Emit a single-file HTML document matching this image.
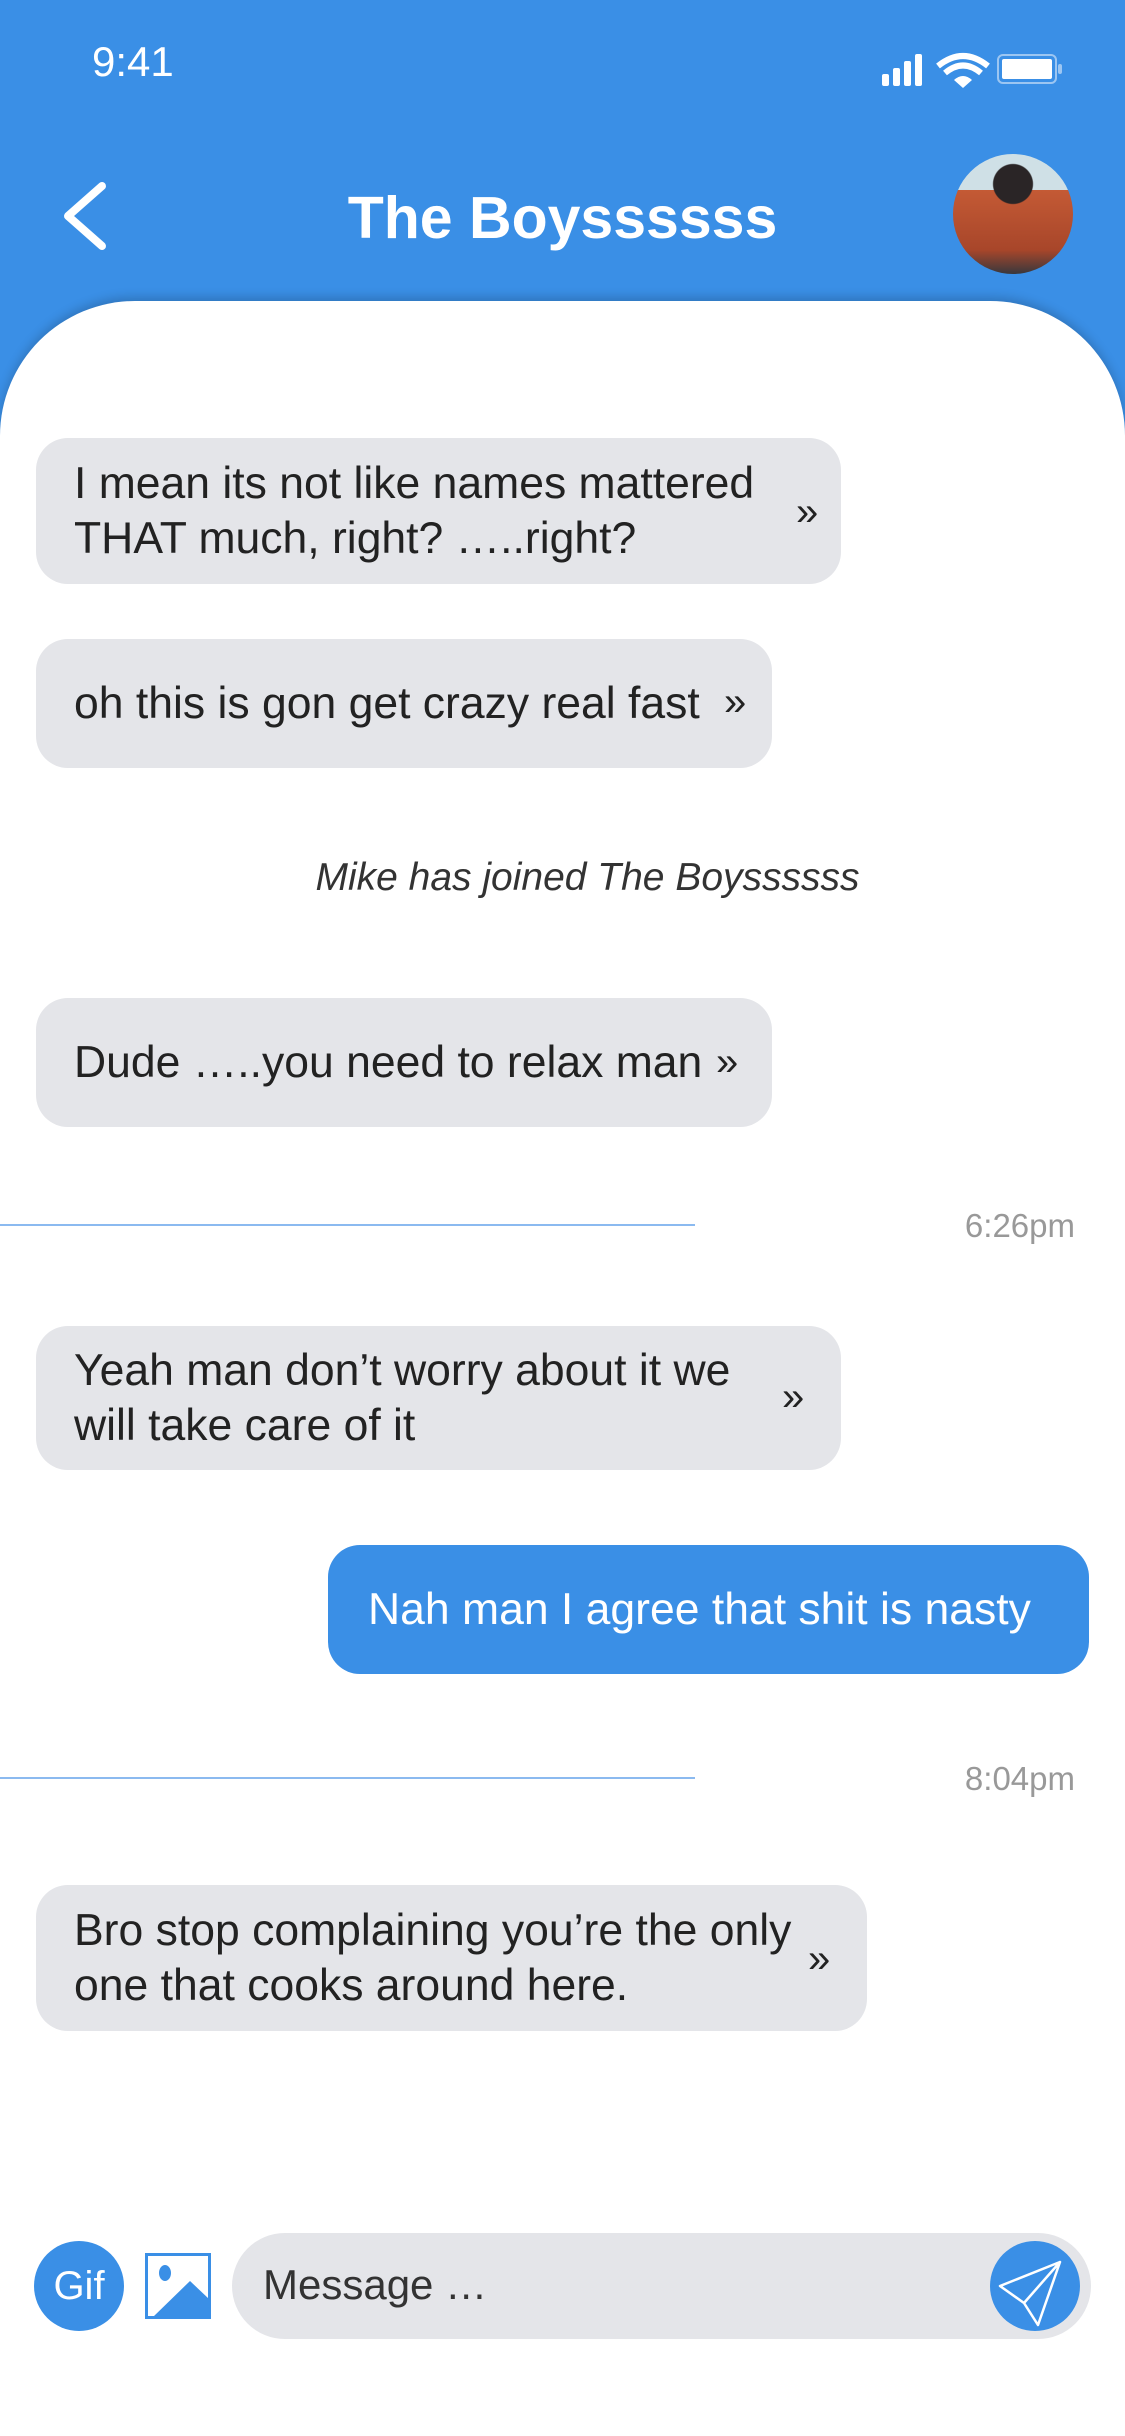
<!DOCTYPE html>
<html><head><meta charset="utf-8"><style>
*{margin:0;padding:0;box-sizing:border-box}
body{width:1125px;height:2436px;position:relative;background:#3a8fe6;font-family:"Liberation Sans",sans-serif;overflow:hidden}
.abs{position:absolute}
.sheet{position:absolute;left:0;top:301px;width:1125px;height:2135px;background:#fff;border-radius:135px 135px 0 0;box-shadow:0 -4px 10px rgba(0,0,0,.18)}
.b{position:absolute;background:#e4e5e9;border-radius:32px;color:#222;font-size:44.5px;line-height:55px;padding-left:38px;display:flex;flex-direction:column;justify-content:center;white-space:nowrap}
.ch{position:absolute;font-size:40px;color:#222}
.t{position:absolute;font-size:33px;color:#999}
.ln{position:absolute;left:0;width:695px;height:2px;background:#8bbaf0}
</style></head><body>
<div class="abs" style="left:92px;top:38px;font-size:42px;color:#fff">9:41</div>
<svg class="abs" style="left:880px;top:50px" width="185" height="40" viewBox="0 0 185 40">
<g fill="#fff"><rect x="2" y="24" width="7" height="12" rx="2"/><rect x="13" y="18" width="7" height="18" rx="2"/><rect x="24" y="11" width="7" height="25" rx="2"/><rect x="35" y="4" width="7" height="32" rx="2"/></g>
<path d="M58 16 Q83 -4 108 16" stroke="#fff" stroke-width="6" fill="none"/><path d="M65 23 Q83 8 101 23" stroke="#fff" stroke-width="6" fill="none"/><path d="M74 30 L83 38 L92 30 Q83 22 74 30Z" fill="#fff"/>
<rect x="118" y="5" width="58" height="28" rx="5" fill="none" stroke="#9cc6f2" stroke-width="2"/><rect x="122" y="9" width="50" height="20" rx="2" fill="#fff"/><rect x="178" y="14" width="4" height="10" rx="2" fill="#9cc6f2"/></svg>
<svg class="abs" style="left:62px;top:180px" width="50" height="72"><path d="M44 6 L10 36 L44 66" stroke="#fff" stroke-width="8" fill="none" stroke-linecap="round" stroke-linejoin="round" transform="translate(-4,0)"/></svg>
<div class="abs" style="left:0;width:1125px;top:184px;text-align:center;color:#fff;font-size:59px;font-weight:bold">The Boyssssss</div>
<div class="abs" style="left:953px;top:154px;width:120px;height:120px;border-radius:50%;overflow:hidden;background:radial-gradient(circle at 50% 25%,#2a2526 0 18%,transparent 19%),linear-gradient(#cfe0e6 0 30%,#c45a35 30%,#a8462a 80%,#39383c 100%)"></div>
<div class="sheet"></div>
<div class="b" style="left:36px;top:438px;width:805px;height:146px">I mean its not like names mattered<br>THAT much, right? …..right?</div>
<div class="ch" style="left:796px;top:490px">»</div>
<div class="b" style="left:36px;top:639px;width:736px;height:129px">oh this is gon get crazy real fast</div>
<div class="ch" style="left:724px;top:680px">»</div>
<div class="abs" style="left:0;width:1175px;text-align:center;top:856px;font-size:39px;font-style:italic;color:#333">Mike has joined The Boyssssss</div>
<div class="b" style="left:36px;top:998px;width:736px;height:129px">Dude …..you need to relax man</div>
<div class="ch" style="left:716px;top:1040px">»</div>
<div class="ln" style="top:1224px"></div>
<div class="t" style="right:50px;top:1207px">6:26pm</div>
<div class="b" style="left:36px;top:1326px;width:805px;height:144px">Yeah man don’t worry about it we<br>will take care of it</div>
<div class="ch" style="left:782px;top:1375px">»</div>
<div class="b" style="left:328px;top:1545px;width:761px;height:129px;background:#3a8fe6;color:#fff;padding-left:40px">Nah man I agree that shit is nasty</div>
<div class="ln" style="top:1777px"></div>
<div class="t" style="right:50px;top:1760px">8:04pm</div>
<div class="b" style="left:36px;top:1885px;width:831px;height:146px">Bro stop complaining you’re the only<br>one that cooks around here.</div>
<div class="ch" style="left:808px;top:1937px">»</div>
<div class="abs" style="left:34px;top:2241px;width:90px;height:90px;border-radius:50%;background:#3a8fe6;color:#fff;font-size:40px;line-height:90px;text-align:center">Gif</div>
<svg class="abs" style="left:145px;top:2253px" width="66" height="66"><rect x="1.5" y="1.5" width="63" height="63" fill="#fff" stroke="#3a8fe6" stroke-width="3"/><ellipse cx="20" cy="20" rx="6" ry="8" fill="#3a8fe6"/><path d="M8 64 L45 28 L64 46 L64 64Z" fill="#3a8fe6"/></svg>
<div class="abs" style="left:232px;top:2233px;width:859px;height:106px;border-radius:53px;background:#e4e5e9"></div>
<div class="abs" style="left:263px;top:2261px;font-size:42px;color:#333">Message …</div>
<svg class="abs" style="left:990px;top:2241px" width="90" height="90"><circle cx="45" cy="45" r="45" fill="#3a8fe6"/><path d="M70 21 L10 45 L34 62 Z M70 21 L34 62 L48 84 Z" fill="none" stroke="#fff" stroke-width="2.5" stroke-linejoin="round"/></svg>
</body></html>
